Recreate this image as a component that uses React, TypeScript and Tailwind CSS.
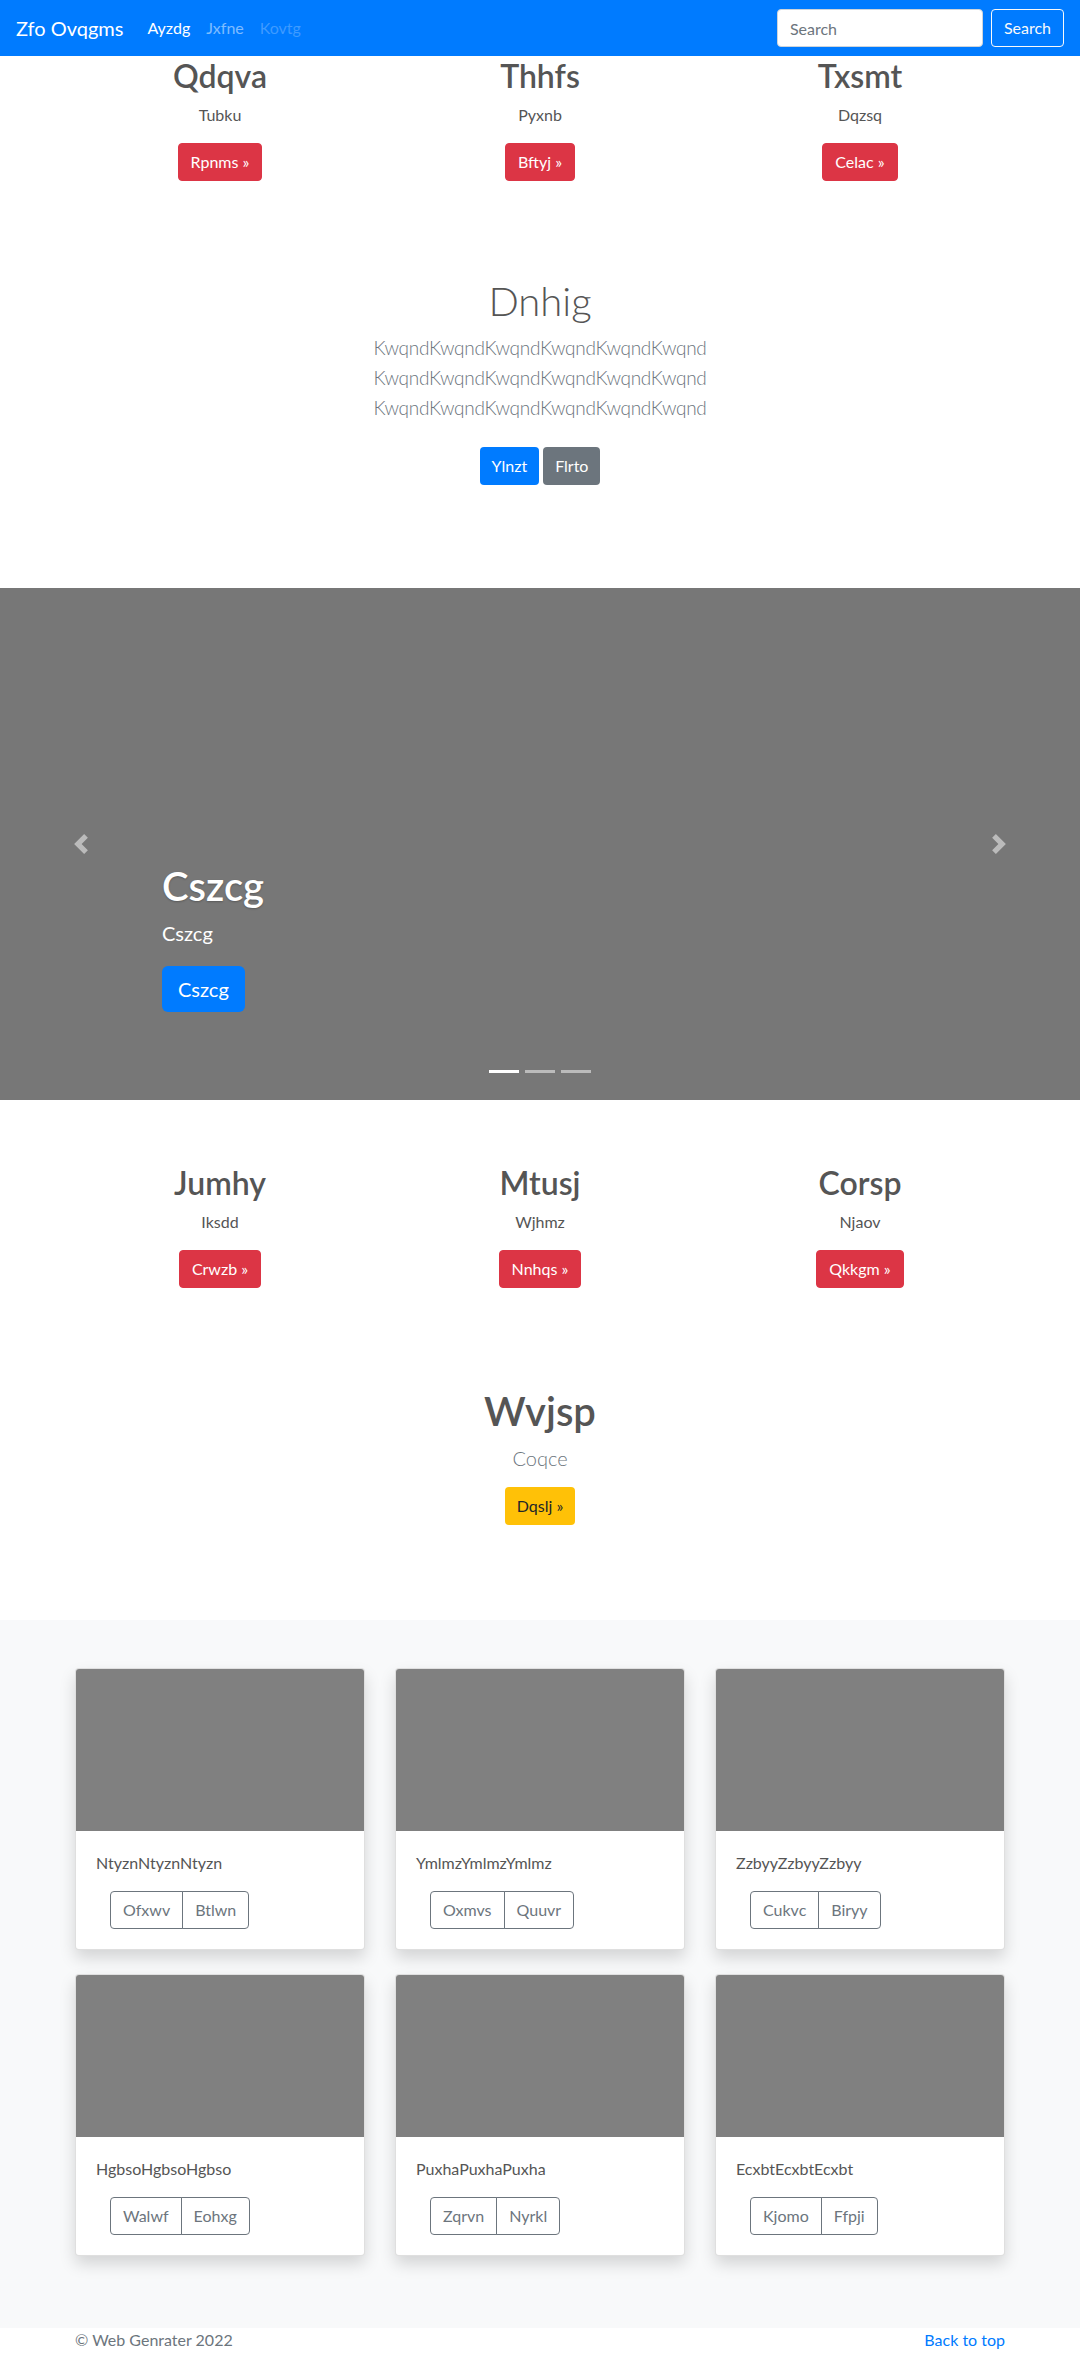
import React from "react";

const cols1 = [
  { h: "Qdqva", p: "Tubku", b: "Rpnms »" },
  { h: "Thhfs", p: "Pyxnb", b: "Bftyj »" },
  { h: "Txsmt", p: "Dqzsq", b: "Celac »" },
];
const cols2 = [
  { h: "Jumhy", p: "Iksdd", b: "Crwzb »" },
  { h: "Mtusj", p: "Wjhmz", b: "Nnhqs »" },
  { h: "Corsp", p: "Njaov", b: "Qkkgm »" },
];
const cards = [
  { t: "NtyznNtyznNtyzn", a: "Ofxwv", b: "Btlwn" },
  { t: "YmlmzYmlmzYmlmz", a: "Oxmvs", b: "Quuvr" },
  { t: "ZzbyyZzbyyZzbyy", a: "Cukvc", b: "Biryy" },
  { t: "HgbsoHgbsoHgbso", a: "Walwf", b: "Eohxg" },
  { t: "PuxhaPuxhaPuxha", a: "Zqrvn", b: "Nyrkl" },
  { t: "EcxbtEcxbtEcxbt", a: "Kjomo", b: "Ffpji" },
];

function Cols({ items }: { items: { h: string; p: string; b: string }[] }) {
  return (
    <div className="w-[960px] mx-auto grid grid-cols-3">
      {items.map((c) => (
        <div key={c.h} className="px-[15px] text-center flex flex-col items-center">
          <h2 className="text-[32px] leading-[38px] font-semibold text-[#555] mb-2">{c.h}</h2>
          <p className="text-[16px] leading-6 text-[#555] mb-4">{c.p}</p>
          <a className="inline-block bg-[#dc3545] text-white text-[16px] leading-6 py-[6px] px-3 rounded border border-[#dc3545]">
            {c.b}
          </a>
        </div>
      ))}
    </div>
  );
}

export default function App() {
  return (
    <div className="bg-white font-['Lato','Open_Sans',sans-serif] text-[#555]">
      {/* Navbar */}
      <nav className="h-14 bg-[#007bff] flex items-center px-4">
        <a className="text-white text-[20px] leading-[30px] mr-4">Zfo Ovqgms</a>
        <ul className="flex text-[16px] leading-6">
          <li className="px-2 text-white">Ayzdg</li>
          <li className="px-2 text-white/50">Jxfne</li>
          <li className="px-2 text-white/25">Kovtg</li>
        </ul>
        <form className="ml-auto flex items-center gap-2">
          <input
            className="w-[206px] h-[38px] rounded bg-white px-3 text-[16px] text-[#495057] placeholder:text-[#6c757d] border border-[#ced4da] outline-none"
            placeholder="Search"
          />
          <button
            type="button"
            className="h-[38px] px-3 rounded border border-[#f8f9fa] text-[#f8f9fa] text-[16px]"
          >
            Search
          </button>
        </form>
      </nav>

      {/* Marketing row 1 */}
      <div className="pt-px">
        <Cols items={cols1} />
      </div>

      {/* Jumbotron */}
      <section className="mt-[96px] text-center flex flex-col items-center">
        <h1 className="text-[40px] leading-[48px] font-light text-[#555]">Dnhig</h1>
        <p className="mt-2 text-[19px] leading-[30px] tracking-[-0.3px] font-light text-[#6c757d]">
          KwqndKwqndKwqndKwqndKwqndKwqnd
          <br />
          KwqndKwqndKwqndKwqndKwqndKwqnd
          <br />
          KwqndKwqndKwqndKwqndKwqndKwqnd
        </p>
        <div className="mt-6 flex gap-1 justify-center">
          <a className="inline-block bg-[#007bff] text-white text-[16px] leading-6 py-[7px] px-3 rounded">Ylnzt</a>
          <a className="inline-block bg-[#6c757d] text-white text-[16px] leading-6 py-[7px] px-3 rounded">Flrto</a>
        </div>
      </section>

      {/* Carousel */}
      <section className="mt-[103px] h-[512px] bg-[#777] relative flex flex-col justify-end pl-[162px] pb-[88px]">
        <h1 className="text-[40px] leading-[48px] font-semibold text-white [text-shadow:0_1px_2px_rgba(0,0,0,0.25)]">
          Cszcg
        </h1>
        <p className="mt-2 text-[20px] leading-[30px] text-white">Cszcg</p>
        <div className="mt-[18px]">
          <a className="inline-block bg-[#007bff] text-white text-[20px] leading-[30px] py-2 px-4 rounded-md">
            Cszcg
          </a>
        </div>
        <div className="absolute left-0 top-0 bottom-0 w-[15%] flex items-center justify-center opacity-50">
          <svg width="20" height="20" viewBox="0 0 8 8" fill="#fff">
            <path d="M5.25 0l-4 4 4 4 1.5-1.5-2.5-2.5 2.5-2.5-1.5-1.5z" />
          </svg>
        </div>
        <div className="absolute right-0 top-0 bottom-0 w-[15%] flex items-center justify-center opacity-50">
          <svg width="20" height="20" viewBox="0 0 8 8" fill="#fff">
            <path d="M2.75 0l-1.5 1.5 2.5 2.5-2.5 2.5 1.5 1.5 4-4-4-4z" />
          </svg>
        </div>
        <div className="absolute left-0 right-0 bottom-[27px] flex justify-center gap-[6px]">
          <span className="w-[30px] h-[3px] bg-white" />
          <span className="w-[30px] h-[3px] bg-white/50" />
          <span className="w-[30px] h-[3px] bg-white/50" />
        </div>
      </section>

      {/* Marketing row 2 */}
      <div className="mt-16">
        <Cols items={cols2} />
      </div>

      {/* Wvjsp */}
      <section className="mt-[99px] text-center flex flex-col items-center">
        <h1 className="text-[40px] leading-[48px] font-semibold text-[#555]">Wvjsp</h1>
        <p className="mt-2 text-[20px] leading-[30px] font-light text-[#6c757d]">Coqce</p>
        <a className="mt-[14px] inline-block bg-[#ffc107] text-[#212529] text-[16px] leading-6 py-[7px] px-3 rounded">
          Dqslj »
        </a>
      </section>

      {/* Album */}
      <section className="mt-[95px] bg-[#f8f9fa] pt-12 pb-[72px]">
        <div className="w-[960px] mx-auto px-[15px] grid grid-cols-3 gap-x-[30px] gap-y-6">
          {cards.map((c) => (
            <div
              key={c.t}
              className="bg-white rounded border border-black/[0.125] shadow-[0_8px_16px_rgba(0,0,0,0.15)] overflow-hidden"
            >
              <div className="h-[162px] bg-[#808080]" />
              <div className="p-5">
                <p className="text-[16px] leading-6 text-[#555]">{c.t}</p>
                <div className="mt-4 ml-[14px] flex">
                  <span className="h-[38px] px-3 flex items-center text-[16px] text-[#6c757d] border border-[#6c757d] rounded-l">
                    {c.a}
                  </span>
                  <span className="-ml-px h-[38px] px-3 flex items-center text-[16px] text-[#6c757d] border border-[#6c757d] rounded-r">
                    {c.b}
                  </span>
                </div>
              </div>
            </div>
          ))}
        </div>
      </section>

      {/* Footer */}
      <footer className="w-[960px] mx-auto px-[15px] flex justify-between text-[16px] leading-6">
        <p className="text-[#6c757d]">© Web Genrater 2022</p>
        <a className="text-[#007bff]">Back to top</a>
      </footer>
    </div>
  );
}
